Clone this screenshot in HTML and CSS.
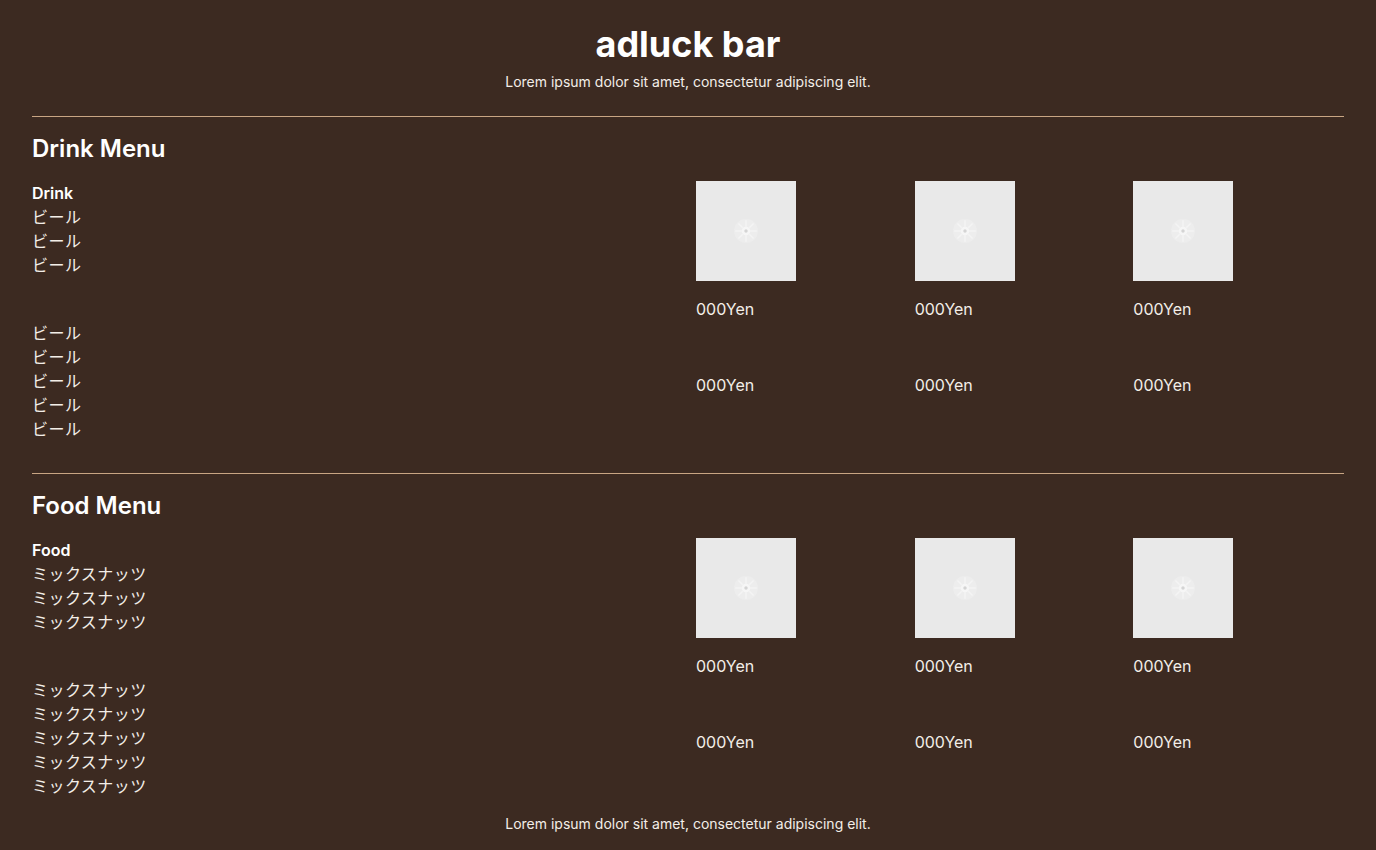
FILE: index.html
```html
<!DOCTYPE html>
<html lang="ja">
<head>
<meta charset="utf-8">
<title>adluck bar</title>
<link rel="stylesheet" href="styles.css">
</head>
<body>
<div class="page">
  <header class="header">
    <h1 class="title">adluck bar</h1>
    <p class="lead">Lorem ipsum dolor sit amet, consectetur adipiscing elit.</p>
  </header>

  <section class="menu">
    <h2 class="menu-title">Drink Menu</h2>
    <div class="row">
      <ul class="names">
        <li class="label">Drink</li>
        <li>ビール</li><li>ビール</li><li>ビール</li>
      </ul>
      <div class="items">
        <div class="item"><div class="ph"><svg class="ph-icon" viewBox="0 0 24 24" width="26" height="26"><circle cx="12" cy="12" r="11" fill="#ededed"/><g stroke="#f4f4f4" stroke-width="1.4"><path d="M12 2v6M12 16v6M2 12h6M16 12h6M5 5l4 4M15 15l4 4M19 5l-4 4M9 15l-4 4"/></g><circle cx="12" cy="12" r="4" fill="#f6f6f6"/><circle cx="12" cy="12" r="1.6" fill="#d4d4d4"/></svg></div><span class="price">000Yen</span></div>
        <div class="item"><div class="ph"><svg class="ph-icon" viewBox="0 0 24 24" width="26" height="26"><circle cx="12" cy="12" r="11" fill="#ededed"/><g stroke="#f4f4f4" stroke-width="1.4"><path d="M12 2v6M12 16v6M2 12h6M16 12h6M5 5l4 4M15 15l4 4M19 5l-4 4M9 15l-4 4"/></g><circle cx="12" cy="12" r="4" fill="#f6f6f6"/><circle cx="12" cy="12" r="1.6" fill="#d4d4d4"/></svg></div><span class="price">000Yen</span></div>
        <div class="item"><div class="ph"><svg class="ph-icon" viewBox="0 0 24 24" width="26" height="26"><circle cx="12" cy="12" r="11" fill="#ededed"/><g stroke="#f4f4f4" stroke-width="1.4"><path d="M12 2v6M12 16v6M2 12h6M16 12h6M5 5l4 4M15 15l4 4M19 5l-4 4M9 15l-4 4"/></g><circle cx="12" cy="12" r="4" fill="#f6f6f6"/><circle cx="12" cy="12" r="1.6" fill="#d4d4d4"/></svg></div><span class="price">000Yen</span></div>
      </div>
    </div>
    <div class="row">
      <ul class="names">
        <li>ビール</li><li>ビール</li><li>ビール</li><li>ビール</li><li>ビール</li>
      </ul>
      <div class="items items-plain">
        <div class="item"><span class="price">000Yen</span></div>
        <div class="item"><span class="price">000Yen</span></div>
        <div class="item"><span class="price">000Yen</span></div>
      </div>
    </div>
  </section>

  <section class="menu">
    <h2 class="menu-title">Food Menu</h2>
    <div class="row">
      <ul class="names">
        <li class="label">Food</li>
        <li>ミックスナッツ</li><li>ミックスナッツ</li><li>ミックスナッツ</li>
      </ul>
      <div class="items">
        <div class="item"><div class="ph"><svg class="ph-icon" viewBox="0 0 24 24" width="26" height="26"><circle cx="12" cy="12" r="11" fill="#ededed"/><g stroke="#f4f4f4" stroke-width="1.4"><path d="M12 2v6M12 16v6M2 12h6M16 12h6M5 5l4 4M15 15l4 4M19 5l-4 4M9 15l-4 4"/></g><circle cx="12" cy="12" r="4" fill="#f6f6f6"/><circle cx="12" cy="12" r="1.6" fill="#d4d4d4"/></svg></div><span class="price">000Yen</span></div>
        <div class="item"><div class="ph"><svg class="ph-icon" viewBox="0 0 24 24" width="26" height="26"><circle cx="12" cy="12" r="11" fill="#ededed"/><g stroke="#f4f4f4" stroke-width="1.4"><path d="M12 2v6M12 16v6M2 12h6M16 12h6M5 5l4 4M15 15l4 4M19 5l-4 4M9 15l-4 4"/></g><circle cx="12" cy="12" r="4" fill="#f6f6f6"/><circle cx="12" cy="12" r="1.6" fill="#d4d4d4"/></svg></div><span class="price">000Yen</span></div>
        <div class="item"><div class="ph"><svg class="ph-icon" viewBox="0 0 24 24" width="26" height="26"><circle cx="12" cy="12" r="11" fill="#ededed"/><g stroke="#f4f4f4" stroke-width="1.4"><path d="M12 2v6M12 16v6M2 12h6M16 12h6M5 5l4 4M15 15l4 4M19 5l-4 4M9 15l-4 4"/></g><circle cx="12" cy="12" r="4" fill="#f6f6f6"/><circle cx="12" cy="12" r="1.6" fill="#d4d4d4"/></svg></div><span class="price">000Yen</span></div>
      </div>
    </div>
    <div class="row">
      <ul class="names">
        <li>ミックスナッツ</li><li>ミックスナッツ</li><li>ミックスナッツ</li><li>ミックスナッツ</li><li>ミックスナッツ</li>
      </ul>
      <div class="items items-plain">
        <div class="item"><span class="price">000Yen</span></div>
        <div class="item"><span class="price">000Yen</span></div>
        <div class="item"><span class="price">000Yen</span></div>
      </div>
    </div>
  </section>

  <footer class="footer">
    <p class="lead">Lorem ipsum dolor sit amet, consectetur adipiscing elit.</p>
  </footer>
</div>
</body>
</html>
```

FILE: styles.css
```css
* { box-sizing: border-box; }

html, body {
  margin: 0;
  padding: 0;
  background: #3c2a21;
}

body {
  font-family: Inter, "Noto Sans CJK JP", sans-serif;
  color: #f3eee8;
}

.page {
  padding: 24px 32px 0;
}

.header {
  text-align: center;
  padding-bottom: 24px;
}

.title {
  margin: 0;
  font-size: 36px;
  line-height: 40px;
  font-weight: 700;
  color: #ffffff;
}

.lead {
  margin: 8px 0 0;
  font-size: 14px;
  line-height: 20px;
}

.menu {
  border-top: 1px solid #c9a583;
  padding-top: 16px;
  padding-bottom: 32px;
}

.menu-title {
  margin: 0 0 16px;
  font-size: 24px;
  line-height: 32px;
  font-weight: 600;
  color: #ffffff;
}

.row {
  display: grid;
  grid-template-columns: 1fr 1fr;
  column-gap: 16px;
}

.names {
  list-style: none;
  margin: 0;
  padding: 0;
  font-size: 16px;
  line-height: 24px;
  letter-spacing: 0.45px;
}

.names .label {
  font-weight: 600;
  color: #ffffff;
  letter-spacing: 0;
}

.items {
  display: grid;
  grid-template-columns: repeat(3, 1fr);
  column-gap: 8px;
}

.items-plain {
  padding-top: 52px;
}

.item {
  display: flex;
  flex-direction: column;
  align-items: flex-start;
}

.ph {
  width: 100px;
  height: 100px;
  background: #e9e9e9;
  display: flex;
  align-items: center;
  justify-content: center;
  margin-bottom: 16px;
}

.ph-icon {
  display: block;
}

.price {
  font-size: 16px;
  line-height: 24px;
}

.footer {
  text-align: center;
  margin-top: -24px;
}
```
